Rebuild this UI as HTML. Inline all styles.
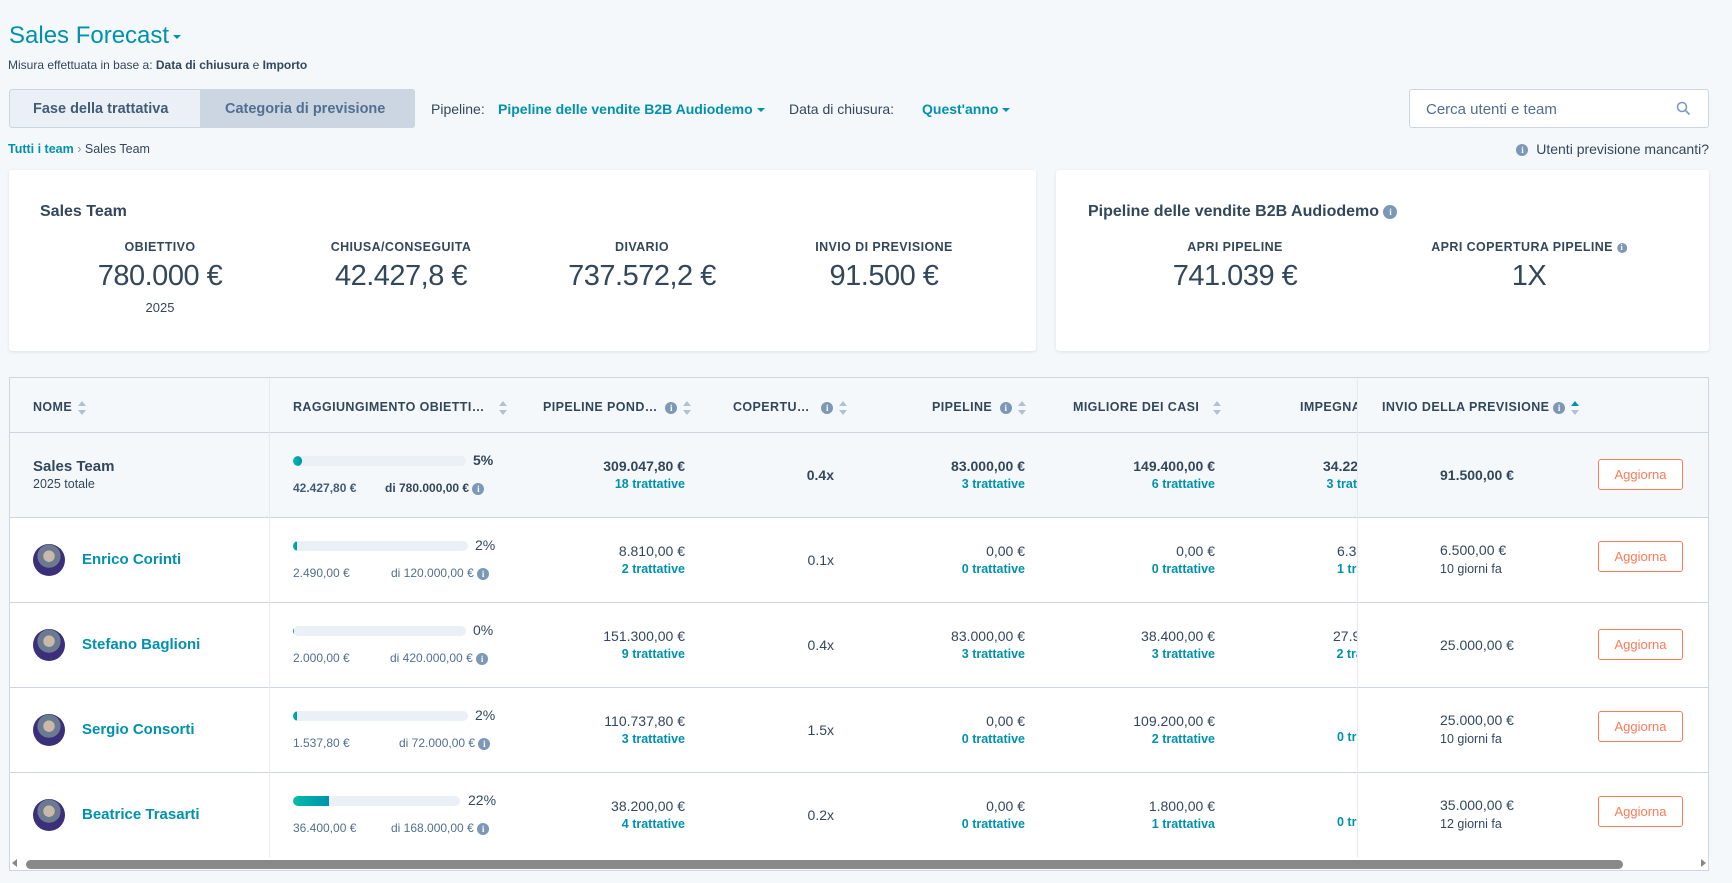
<!DOCTYPE html>
<html><head><meta charset="utf-8"><style>
*{box-sizing:border-box;margin:0;padding:0}
body{width:1732px;height:883px;background:#f5f8fa;font-family:"Liberation Sans",sans-serif;color:#33475b;position:relative;overflow:hidden}
.a{position:absolute;white-space:nowrap}
.teal{color:#0091ae}
.b{font-weight:bold}
.caret{display:inline-block;width:0;height:0;border-left:4px solid transparent;border-right:4px solid transparent;border-top:4px solid currentColor;vertical-align:middle;margin-left:4px}
.card{position:absolute;background:#fff;border-radius:3px;box-shadow:0 1px 3px rgba(45,62,80,.12)}
.lbl{position:absolute;font-size:12.5px;font-weight:bold;letter-spacing:.4px;transform:translateX(-50%);white-space:nowrap}
.big{position:absolute;font-size:29px;letter-spacing:-.5px;transform:translateX(-50%);white-space:nowrap;color:#33475b}
.info{display:inline-block;width:12px;height:12px;border-radius:50%;background:#7c98b6;color:#fff;font-size:9px;font-weight:bold;text-align:center;line-height:12px;vertical-align:middle;font-family:"Liberation Serif",serif}
.hd{position:absolute;top:400px;font-size:12.5px;font-weight:bold;letter-spacing:.4px;white-space:nowrap}
.sort{display:inline-block;vertical-align:middle;margin-left:6px;width:8px;height:14px;position:relative}
.sort:before{content:"";position:absolute;top:0;left:0;border-left:4px solid transparent;border-right:4px solid transparent;border-bottom:5px solid #b0c1d4}
.sort:after{content:"";position:absolute;bottom:0;left:0;border-left:4px solid transparent;border-right:4px solid transparent;border-top:5px solid #b0c1d4}
.sort.up:before{border-bottom-color:#0091ae}
.r{position:absolute;text-align:right;white-space:nowrap;font-size:14px}
.r .s{font-size:12.5px;color:#0091ae;font-weight:bold;margin-top:3px}
.bar{position:absolute;left:293px;height:10px;background:#eaf0f6;border-radius:5px;overflow:hidden}
.bar i{display:block;height:10px;background:linear-gradient(90deg,#00bda5,#0091ae);border-radius:5px}
.btn{position:absolute;left:1598px;width:85px;height:31px;border:1px solid #ff7a59;border-radius:3px;color:#ff7a59;font-size:13px;text-align:center;line-height:29px;background:#fff}
.av{position:absolute;left:33px;width:32px;height:32px;border-radius:50%;background:radial-gradient(circle at 50% 38%,#c9b9a8 0 22%,#6b7a90 23% 45%,#3b2f7a 46%)}
.nm{position:absolute;left:82px;font-size:15px;font-weight:bold;color:#0091ae}
.hl{position:absolute;left:9px;width:1700px;height:1px;background:#cbd6e2}
</style></head><body>
<div class="a teal" style="left:9px;top:22px;font-size:24px">Sales Forecast<span class="caret" style="color:#0091ae"></span></div>
<div class="a" style="left:8px;top:58px;font-size:12px">Misura effettuata in base a: <b>Data di chiusura</b> e <b>Importo</b></div>

<div class="a" style="left:9px;top:89px;width:406px;height:39px;border:1px solid #cbd6e2;border-radius:3px;background:#eaf0f6"></div>
<div class="a" style="left:200px;top:89px;width:215px;height:39px;background:#cbd6e2;border-radius:0 3px 3px 0"></div>
<div class="a b" style="left:33px;top:101px;font-size:14.5px;color:#425b76">Fase della trattativa</div>
<div class="a b" style="left:225px;top:101px;font-size:14.5px;color:#516f90">Categoria di previsione</div>
<div class="a" style="left:431px;top:101px;font-size:14px">Pipeline:</div>
<div class="a teal b" style="left:498px;top:101px;font-size:14px">Pipeline delle vendite B2B Audiodemo<span class="caret"></span></div>
<div class="a" style="left:789px;top:101px;font-size:14px">Data di chiusura:</div>
<div class="a teal b" style="left:922px;top:101px;font-size:14px">Quest'anno<span class="caret"></span></div>
<div class="a" style="left:1409px;top:89px;width:300px;height:39px;border:1px solid #cbd6e2;border-radius:3px;background:#fff"></div>
<div class="a" style="left:1426px;top:101px;font-size:15px;color:#516f90">Cerca utenti e team</div>
<svg class="a" style="left:1676px;top:101px" width="15" height="15" viewBox="0 0 15 15"><circle cx="6" cy="6" r="4.5" fill="none" stroke="#7c98b6" stroke-width="1.5"/><path d="M9.5 9.5L13.5 13.5" stroke="#7c98b6" stroke-width="1.6"/></svg>

<div class="a" style="left:8px;top:142px;font-size:12.5px"><span class="teal b">Tutti i team</span> <span style="color:#7c98b6">›</span> Sales Team</div>
<div class="a" style="right:23px;top:141px;font-size:14px"><span class="info">i</span>&nbsp; Utenti previsione mancanti?</div>

<div class="card" style="left:9px;top:170px;width:1027px;height:181px"></div>
<div class="a b" style="left:40px;top:203px;font-size:16px">Sales Team</div>
<div class="lbl" style="left:160px;top:240px">OBIETTIVO</div>
<div class="lbl" style="left:401px;top:240px">CHIUSA/CONSEGUITA</div>
<div class="lbl" style="left:642px;top:240px">DIVARIO</div>
<div class="lbl" style="left:884px;top:240px">INVIO DI PREVISIONE</div>
<div class="big" style="left:160px;top:260px">780.000 €</div>
<div class="big" style="left:401px;top:260px">42.427,8 €</div>
<div class="big" style="left:642px;top:260px">737.572,2 €</div>
<div class="big" style="left:884px;top:260px">91.500 €</div>
<div class="a" style="left:160px;top:300px;transform:translateX(-50%);font-size:13px">2025</div>

<div class="card" style="left:1056px;top:170px;width:653px;height:181px"></div>
<div class="a b" style="left:1088px;top:203px;font-size:16px">Pipeline delle vendite B2B Audiodemo <span class="info" style="width:14px;height:14px;line-height:14px">i</span></div>
<div class="lbl" style="left:1235px;top:240px">APRI PIPELINE</div>
<div class="lbl" style="left:1529px;top:240px">APRI COPERTURA PIPELINE <span class="info" style="width:10px;height:10px;line-height:10px;font-size:8px">i</span></div>
<div class="big" style="left:1235px;top:260px">741.039 €</div>
<div class="big" style="left:1529px;top:260px">1X</div>

<div class="a" style="left:9px;top:377px;width:1700px;height:494px;background:#fff;border:1px solid #cbd6e2"></div>
<div class="a" style="left:10px;top:378px;width:1698px;height:139px;background:#f5f8fa"></div>
<div class="hl" style="top:432px"></div>
<div class="hl" style="top:517px"></div>
<div class="hl" style="top:602px"></div>
<div class="hl" style="top:687px"></div>
<div class="hl" style="top:772px"></div>
<div class="a" style="left:269px;top:378px;width:1px;height:479px;background:#e5ebf1"></div>
<div class="a" style="left:1357px;top:378px;width:1px;height:479px;background:#e5ebf1;box-shadow:-2px 0 4px rgba(0,0,0,.03)"></div>

<div class="hd" style="left:33px">NOME<span class="sort"></span></div>
<div class="hd" style="left:293px">RAGGIUNGIMENTO OBIETTI…<span class="sort" style="margin-left:14px"></span></div>
<div class="hd" style="left:543px">PIPELINE POND… &nbsp;<span class="info">i</span><span class="sort"></span></div>
<div class="hd" style="left:733px">COPERTU… &nbsp;&nbsp;<span class="info">i</span><span class="sort"></span></div>
<div class="hd" style="left:932px">PIPELINE &nbsp;<span class="info">i</span><span class="sort"></span></div>
<div class="hd" style="left:1073px">MIGLIORE DEI CASI &nbsp;<span class="sort"></span></div>
<div class="a" style="left:1300px;top:400px;width:57px;overflow:hidden;font-size:12.5px;font-weight:bold;letter-spacing:.4px">IMPEGNATO</div>
<div class="hd" style="left:1382px">INVIO DELLA PREVISIONE <span class="info">i</span><span class="sort up"></span></div>

<div class="a b" style="left:33px;top:458px;font-size:15px">Sales Team</div>
<div class="a" style="left:33px;top:477px;font-size:12.5px">2025 totale</div>
<div class="bar" style="top:456px;width:173px"><i style="width:9px"></i></div>
<div class="a b" style="left:473px;top:452px;font-size:14px">5%</div>
<div class="a b" style="left:293px;top:481px;font-size:12px;color:#425b76">42.427,80 €</div>
<div class="a b" style="left:385px;top:481px;font-size:12px">di 780.000,00 € <span class="info">i</span></div>

<div class="r" style="right:1047px;top:458px"><b>309.047,80 €</b><div class="s">18 trattative</div></div>
<div class="r" style="right:898px;top:467px;font-weight:bold">0.4x</div>
<div class="r" style="right:707px;top:458px"><b>83.000,00 €</b><div class="s">3 trattative</div></div>
<div class="r" style="right:517px;top:458px"><b>149.400,00 €</b><div class="s">6 trattative</div></div>
<div class="a" style="left:1323px;top:458px;width:34px;overflow:hidden;font-size:14px"><b>34.225</b><div style="font-size:12.5px;color:#0091ae;font-weight:bold;margin-top:3px">&nbsp;3 tratt</div></div>
<div class="a b" style="left:1440px;top:467px;font-size:14px">91.500,00 €</div>
<div class="btn" style="top:459px">Aggiorna</div>

<div class="av" style="top:544px"></div><div class="nm" style="top:551px">Enrico Corinti</div>
<div class="bar" style="top:541px;width:175px"><i style="width:4px"></i></div>
<div class="a" style="left:475px;top:537px;font-size:14px">2%</div>
<div class="a" style="left:293px;top:566px;font-size:12px;color:#516f90">2.490,00 €</div>
<div class="a" style="left:391px;top:566px;font-size:12px;color:#516f90">di 120.000,00 € <span class="info">i</span></div>
<div class="r" style="right:1047px;top:543px">8.810,00 €<div class="s">2 trattative</div></div>
<div class="r" style="right:898px;top:552px">0.1x</div>
<div class="r" style="right:707px;top:543px">0,00 €<div class="s">0 trattative</div></div>
<div class="r" style="right:517px;top:543px">0,00 €<div class="s">0 trattative</div></div>
<div class="a" style="left:1337px;top:543px;width:20px;overflow:hidden;font-size:14px">6.325<div style="font-size:12.5px;color:#0091ae;font-weight:bold;margin-top:3px">1 tratt</div></div>
<div class="a" style="left:1440px;top:542px;font-size:14px">6.500,00 €<div style="font-size:12.5px;margin-top:4px">10 giorni fa</div></div>
<div class="btn" style="top:541px">Aggiorna</div>

<div class="av" style="top:629px"></div><div class="nm" style="top:636px">Stefano Baglioni</div>
<div class="bar" style="top:626px;width:173px"><i style="width:1px"></i></div>
<div class="a" style="left:473px;top:622px;font-size:14px">0%</div>
<div class="a" style="left:293px;top:651px;font-size:12px;color:#516f90">2.000,00 €</div>
<div class="a" style="left:390px;top:651px;font-size:12px;color:#516f90">di 420.000,00 € <span class="info">i</span></div>
<div class="r" style="right:1047px;top:628px">151.300,00 €<div class="s">9 trattative</div></div>
<div class="r" style="right:898px;top:637px">0.4x</div>
<div class="r" style="right:707px;top:628px">83.000,00 €<div class="s">3 trattative</div></div>
<div class="r" style="right:517px;top:628px">38.400,00 €<div class="s">3 trattative</div></div>
<div class="a" style="left:1333px;top:628px;width:24px;overflow:hidden;font-size:14px">27.900<div style="font-size:12.5px;color:#0091ae;font-weight:bold;margin-top:3px">&nbsp;2 tratt</div></div>
<div class="a" style="left:1440px;top:637px;font-size:14px">25.000,00 €</div>
<div class="btn" style="top:629px">Aggiorna</div>

<div class="av" style="top:714px"></div><div class="nm" style="top:721px">Sergio Consorti</div>
<div class="bar" style="top:711px;width:175px"><i style="width:4px"></i></div>
<div class="a" style="left:475px;top:707px;font-size:14px">2%</div>
<div class="a" style="left:293px;top:736px;font-size:12px;color:#516f90">1.537,80 €</div>
<div class="a" style="left:399px;top:736px;font-size:12px;color:#516f90">di 72.000,00 € <span class="info">i</span></div>
<div class="r" style="right:1047px;top:713px">110.737,80 €<div class="s">3 trattative</div></div>
<div class="r" style="right:898px;top:722px">1.5x</div>
<div class="r" style="right:707px;top:713px">0,00 €<div class="s">0 trattative</div></div>
<div class="r" style="right:517px;top:713px">109.200,00 €<div class="s">2 trattative</div></div>
<div class="a" style="left:1337px;top:730px;width:20px;overflow:hidden;font-size:12.5px;color:#0091ae;font-weight:bold">0 tratt</div>
<div class="a" style="left:1440px;top:712px;font-size:14px">25.000,00 €<div style="font-size:12.5px;margin-top:4px">10 giorni fa</div></div>
<div class="btn" style="top:711px">Aggiorna</div>

<div class="av" style="top:799px"></div><div class="nm" style="top:806px">Beatrice Trasarti</div>
<div class="bar" style="top:796px;width:167px"><i style="width:36px;border-radius:5px 0 0 5px"></i></div>
<div class="a" style="left:468px;top:792px;font-size:14px">22%</div>
<div class="a" style="left:293px;top:821px;font-size:12px;color:#516f90">36.400,00 €</div>
<div class="a" style="left:391px;top:821px;font-size:12px;color:#516f90">di 168.000,00 € <span class="info">i</span></div>
<div class="r" style="right:1047px;top:798px">38.200,00 €<div class="s">4 trattative</div></div>
<div class="r" style="right:898px;top:807px">0.2x</div>
<div class="r" style="right:707px;top:798px">0,00 €<div class="s">0 trattative</div></div>
<div class="r" style="right:517px;top:798px">1.800,00 €<div class="s">1 trattativa</div></div>
<div class="a" style="left:1337px;top:815px;width:20px;overflow:hidden;font-size:12.5px;color:#0091ae;font-weight:bold">0 tratt</div>
<div class="a" style="left:1440px;top:797px;font-size:14px">35.000,00 €<div style="font-size:12.5px;margin-top:4px">12 giorni fa</div></div>
<div class="btn" style="top:796px">Aggiorna</div>

<div class="a" style="left:10px;top:857px;width:1698px;height:13px;background:#fff"></div>
<div class="a" style="left:12px;top:859px;border-top:4px solid transparent;border-bottom:4px solid transparent;border-right:5px solid #888"></div>
<div class="a" style="left:1701px;top:859px;border-top:4px solid transparent;border-bottom:4px solid transparent;border-left:5px solid #888"></div>
<div class="a" style="left:26px;top:860px;width:1597px;height:9px;background:#898989;border-radius:5px"></div>
</body></html>
